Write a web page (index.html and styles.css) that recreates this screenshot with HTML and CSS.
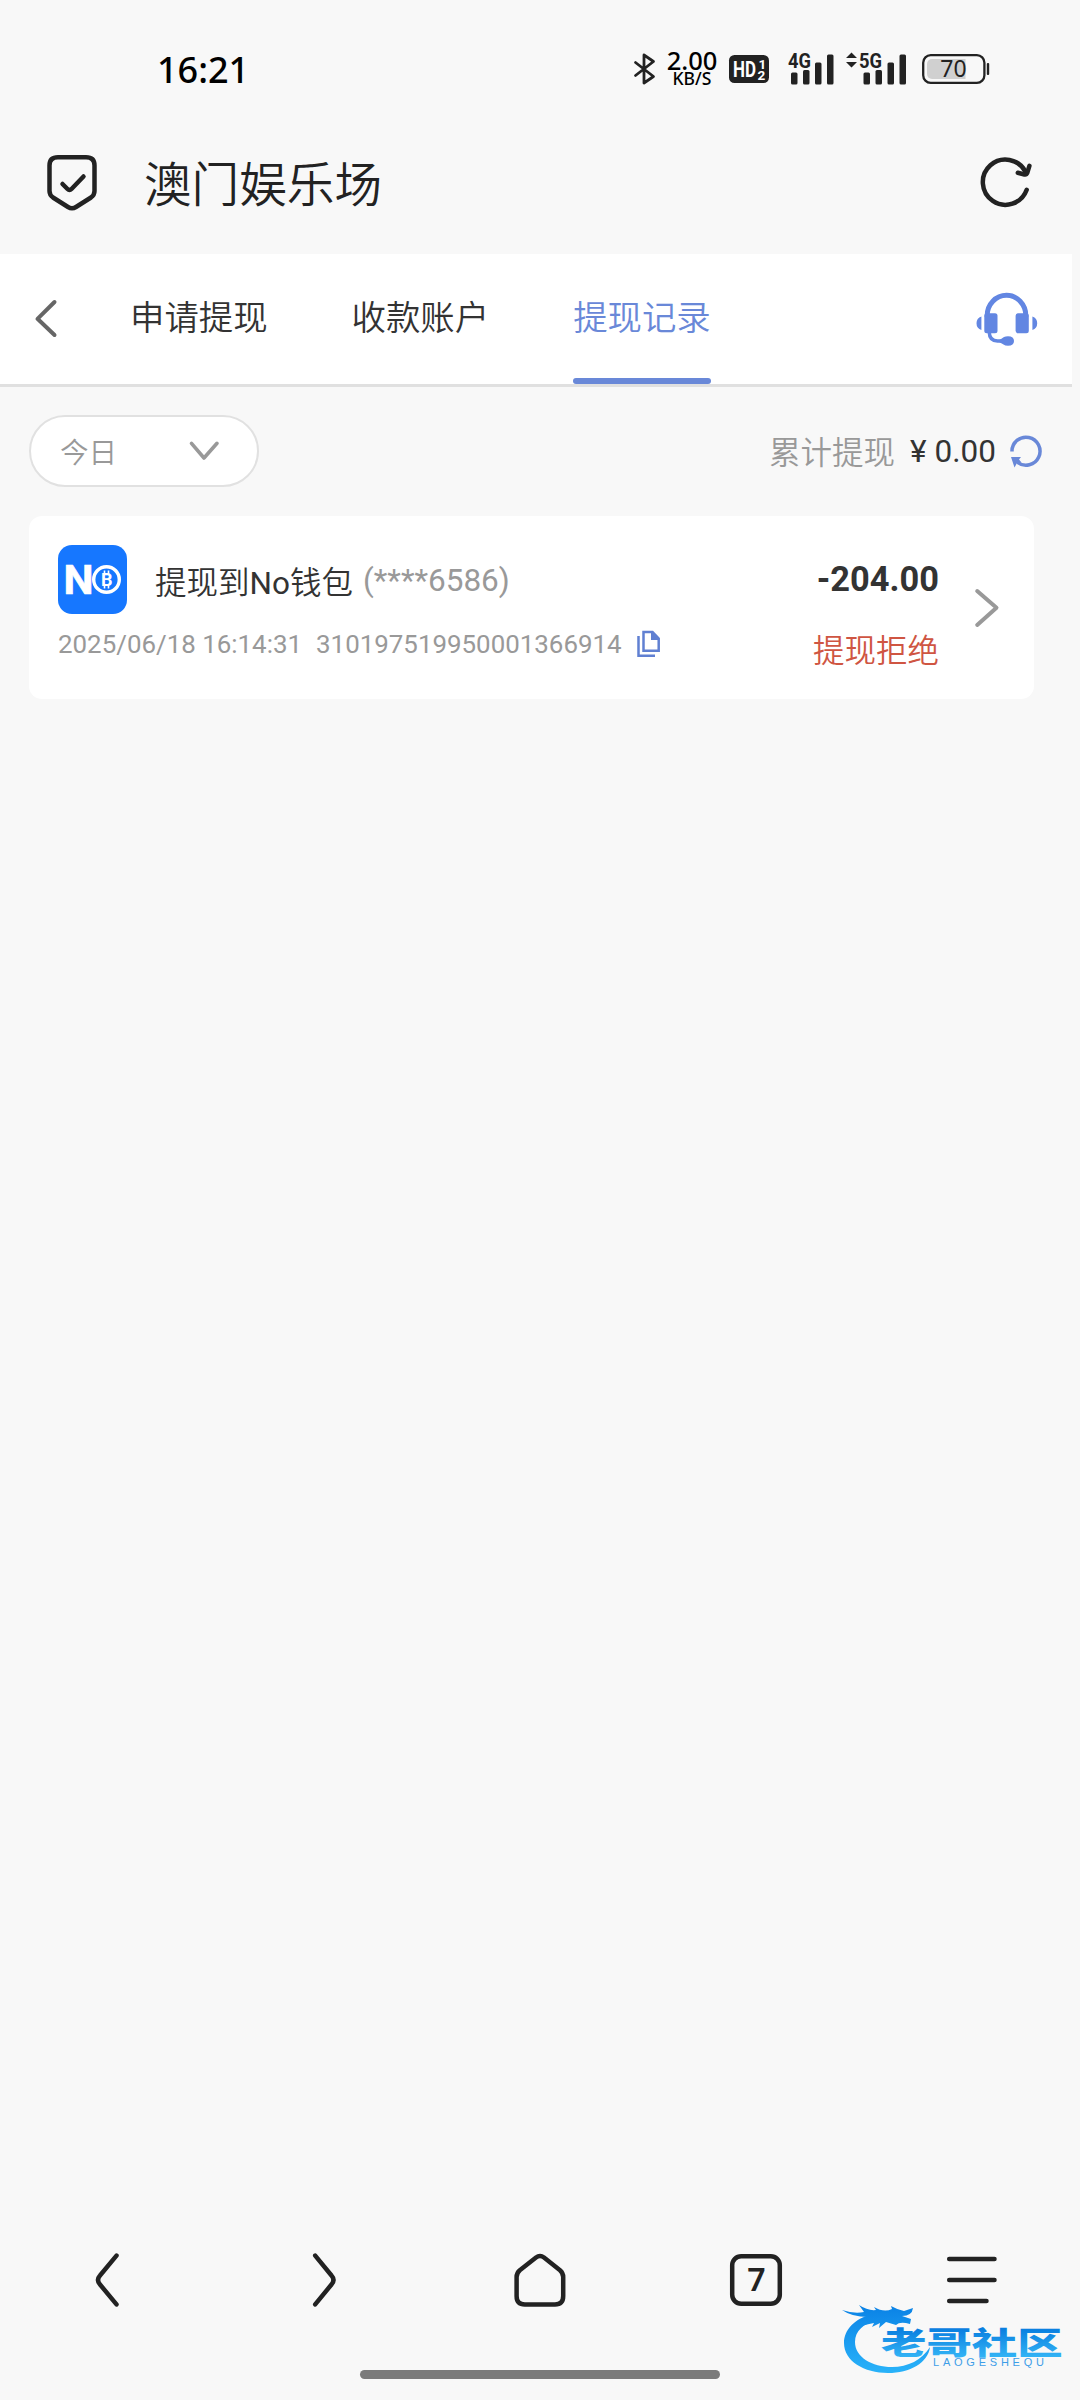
FILE: index.html
```html
<!DOCTYPE html>
<html lang="zh-CN">
<head>
<meta charset="utf-8">
<title>澳门娱乐场</title>
<link rel="stylesheet" href="styles.css">
</head>
<body>
<header class="status">
  <span class="clock">16:21</span>
  <div class="status-icons">
    <svg class="bt" width="22" height="34" viewBox="0 0 22 34"><path d="M1.500 10.500 19.500 24.500 10 31V3L19.500 9.500 1.500 23.500"/></svg>
    <div class="speed"><span class="rate">2.00</span><span class="unit">KB/S</span></div>
    <svg class="hd" width="40" height="28" viewBox="0 0 40 28"><rect width="40" height="28" rx="5.500"/><text class="hd-big" x="4" y="22" textLength="23" lengthAdjust="spacingAndGlyphs">HD</text><text class="hd-small" x="29.500" y="13.500">1</text><text class="hd-small" x="28.500" y="24.500">2</text></svg>
    <svg class="sig sig-4g" width="48" height="34" viewBox="0 0 48 34"><text class="net" x="1" y="16" textLength="23" lengthAdjust="spacingAndGlyphs">4G</text><rect x="4" y="20.500" width="6.500" height="12" rx="1.500"/><rect x="16" y="18" width="6.500" height="14.500" rx="1.500"/><rect x="28" y="10.500" width="6.500" height="22" rx="1.500"/><rect x="40" y="2.500" width="6.500" height="30" rx="1.500"/></svg>
    <svg class="sig" width="62" height="34" viewBox="0 0 62 34"><path d="M1 6 6.500.5 12 6zM1 10h11l-5.500 5.500z"/><text class="net" x="14" y="16" textLength="23" lengthAdjust="spacingAndGlyphs">5G</text><rect x="18.500" y="20.500" width="6.500" height="12" rx="1.500"/><rect x="30.500" y="18" width="6.500" height="14.500" rx="1.500"/><rect x="42.500" y="10.500" width="6.500" height="22" rx="1.500"/><rect x="54.500" y="2.500" width="6.500" height="30" rx="1.500"/></svg>
    <svg class="battery" width="68" height="30" viewBox="0 0 68 30"><path class="level" d="M10 5h33.500v20H10a5 5 0 0 1-5-5V10a5 5 0 0 1 5-5z"/><rect class="shell" x="1.200" y="1.200" width="61.200" height="27.600" rx="7.500"/><rect class="nub" x="64.800" y="9" width="2.400" height="12" rx="1"/><text x="31.500" y="23.300" text-anchor="middle">70</text></svg>
  </div>
</header>

<div class="titlebar">
  <svg class="line shield" width="54" height="58" viewBox="0 0 54 58"><path d="M13 4.300H41Q49.500 4.300 49.500 12.500V38Q49.500 42 46 44.500L31 54Q27 56.500 23 54L8 44.500Q4.500 42 4.500 38V12.500Q4.500 4.300 13 4.300z"/><path d="M17.500 31 22.500 36Q24.500 38 26.500 36L38.500 23.500"/></svg>
  <h1>澳门娱乐场</h1>
  <svg class="line reload" width="56" height="56" viewBox="0 0 56 56"><path d="M48.700 35.800A22.600 22.600 0 1 1 47.500 17.800"/><path d="M39.800 18.800 46.500 20.500Q48.500 20.800 49.200 19L51.400 11.800"/></svg>
</div>

<nav class="tabs">
  <svg class="tabs-back" width="24" height="40" viewBox="0 0 24 40"><path d="M20.500 3 3.500 19.800 20.500 36"/></svg>
  <a class="tab">申请提现</a>
  <a class="tab">收款账户</a>
  <a class="tab active">提现记录</a>
  <svg class="headset" width="62" height="56" viewBox="0 0 62 56"><path class="band" d="M11.200 26V24.500a19.300 20.200 0 0 1 38.600 0V26"/><rect x="8.300" y="22.300" width="13.200" height="20" rx="2.500"/><rect x="39.600" y="22.300" width="13.200" height="20" rx="2.500"/><path d="M5.400 25.500V39Q.5 37.500.5 32.300T5.400 25.500zM56.400 25.500V39Q61.200 37.500 61.200 32.300T56.400 25.500z"/><path class="mic" d="M13.200 41Q13.500 50 21.500 50H28"/><path d="M23.500 49 28 46Q29.500 45.300 32 45.300Q38 45.300 38 50Q38 54.800 32 54.800Q29 54.800 27.500 53.500L23.500 51.300z"/></svg>
</nav>

<section class="filter">
  <div class="select"><span>今日</span><svg width="30" height="20" viewBox="0 0 30 20"><path d="M2.500 2.300 15 17 28 2.300"/></svg></div>
  <div class="total"><span class="label">累计提现</span><span class="yen">¥</span><span>0.00</span>
  <svg width="34" height="34" viewBox="0 0 34 34"><path class="arc" d="M3 17.500A14 14 0 1 1 8.500 28.300"/><path class="head" d="M2 23H12L10 25.500 12.500 28.500 8 29 5.500 33.500z"/></svg></div>
</section>

<article class="record">
  <div class="info">
    <div class="method">
      <svg class="wallet" width="69" height="69" viewBox="0 0 69 69"><rect width="69" height="69" rx="14"/><text class="n" x="5.500" y="48.500" textLength="30" lengthAdjust="spacingAndGlyphs">N</text><circle cx="48.500" cy="34.500" r="12.800"/><text class="b" x="48.800" y="41" text-anchor="middle">B</text><path d="M46.500 25.500v3.500M50.500 25.500v3.500M46.500 40v3.500M50.500 40v3.500"/></svg>
      <span class="name">提现到<span class="latin">No</span>钱包</span><span class="acct">(****6586)</span>
    </div>
    <div class="meta"><span class="time">2025/06/18 16:14:31</span><span class="order">310197519950001366914</span>
    <svg width="24" height="28" viewBox="0 0 24 28"><path class="o" d="M6.500 2H15.500L21.700 8.500V20.800H6.500z"/><path class="f" d="M14 1 22.500 10H14z"/><path class="o" d="M1.500 6V25.700H18"/></svg></div>
  </div>
  <div class="result"><strong>-204.00</strong><span>提现拒绝</span></div>
  <svg class="go" width="26" height="40" viewBox="0 0 26 40"><path d="M3.200 3 22.500 19.800 3.200 37"/></svg>
</article>

<footer class="toolbar">
  <svg class="line" width="56" height="56" viewBox="0 0 56 56"><path d="M36.500 3.600 20 23.500Q16 28 20 32.500L36.500 52.400"/></svg>
  <svg class="line" width="56" height="56" viewBox="0 0 56 56"><path d="M19.200 3.600 35.500 23.500Q39.500 28 35.500 32.500L19.200 52.400"/></svg>
  <svg class="line" width="56" height="56" viewBox="0 0 56 56"><path d="M24 5.500Q28 2.500 32 5.500L48 18.200Q51.200 21 51.200 25V44Q51.200 52.500 43 52.500H12.800Q4.600 52.500 4.600 44V25Q4.600 21 7.800 18.200z"/></svg>
  <svg class="line pages" width="56" height="56" viewBox="0 0 56 56"><rect x="4.200" y="4.200" width="47.600" height="47.600" rx="9"/><text x="28.300" y="38.500" text-anchor="middle">7</text></svg>
  <svg class="line" width="56" height="56" viewBox="0 0 56 56"><path d="M5.200 7H50.500M5.200 28H50.500M5.200 49H42.500"/></svg>
</footer>
<div class="home-indicator"></div>

<svg class="brand" width="240" height="90" viewBox="0 0 240 90">
  <defs><linearGradient id="blue" x1="0" y1="0" x2="0" y2="1"><stop offset="0.250" stop-color="#0a7fe0"/><stop offset="1" stop-color="#3abdf9"/></linearGradient>
  <linearGradient id="ring" gradientUnits="userSpaceOnUse" x1="0" y1="10" x2="0" y2="78"><stop offset="0" stop-color="#0b83e6"/><stop offset="1" stop-color="#2ab4fa"/></linearGradient></defs>
  <path fill="url(#ring)" d="M32 17C14 22 4 33 4 46C4 64 24 76 48 76C70 76 88 66 90 50C82 63 68 70 52 70C32 70 15 60 15 45C15 34 24 26 36 24z"/>
  <path fill="url(#ring)" d="M2 13Q14 17 24 15L19 8Q28 14 36 13L34 10Q44 16 52 12L51 9Q58 13 64 14L73 11Q72 19 62 19L71 22 70 27Q60 24 56 28L46 25 39 31 40 26 32 30 34 26Q28 27 22 29L28 20Q12 20 2 13z"/>
  <text class="brand-cn" transform="translate(41 56.500) scale(1.490 1)" fill="url(#blue)">老哥社区</text>
  <text class="brand-en" x="93" y="69" textLength="111">LAOGESHEQU</text>
</svg>
</body>
</html>
```
FILE: styles.css
```css
* { box-sizing: border-box; }
body {
  position: relative;
  display: flex;
  flex-direction: column;
  width: 1080px;
  height: 2400px;
  margin: 0;
  overflow: hidden;
  background: #f8f8f8;
  color: #333;
  font-family: Roboto, "Noto Sans CJK SC", sans-serif;
}
svg { display: block; flex: none; fill: none; overflow: visible; }
.line { stroke: #222; stroke-width: 4.500; stroke-linecap: round; stroke-linejoin: round; }

.status { display: flex; align-items: center; justify-content: space-between; height: 140px; padding: 0 90px 0 157px; }
.clock { color: #000; font: 500 36px/40px "Noto Sans", sans-serif; }
.status-icons { display: flex; align-items: center; padding-bottom: 2px; }
.bt { stroke: #222; stroke-width: 2.800; stroke-linejoin: round; stroke-linecap: round; }
.speed { display: flex; flex-direction: column; align-items: center; width: 52px; margin-left: 10px; color: #000; font-family: "Noto Sans", sans-serif; font-weight: 500; }
.rate { font-size: 25.500px; line-height: 19px; }
.unit { font-size: 17.500px; line-height: 17px; }
.hd { margin-left: 11px; fill: #222; }
.hd text { fill: #fff; font-family: Roboto, sans-serif; font-weight: 700; }
.hd-big { font-size: 22px; }
.hd-small { font-size: 13.500px; }
.sig { fill: #222; }
.sig-4g { margin: 0 10px 0 18px; }
.net { font: 700 21px Roboto, sans-serif; }
.battery { margin-left: 15px; }
.level { fill: #d0d0d0; }
.shell { stroke: #222; stroke-width: 2.300; }
.nub { fill: #222; }
.battery text { fill: #222; font: 400 23px "Noto Sans", sans-serif; }

.titlebar { display: flex; align-items: center; height: 114px; padding: 0 46px 30px 45px; }
.titlebar h1 { flex: 1; margin: 0 0 0 45px; color: #222; font-family: "Noto Sans CJK SC", sans-serif; font-size: 47.600px; font-weight: 350; line-height: 60px; }

.tabs { display: flex; align-items: center; width: 1072px; height: 133px; padding: 0 34px; border-bottom: 3px solid #e0e0e0; background: #fff; }
.tabs-back { margin-right: 72px; stroke: #666; stroke-width: 4; stroke-linecap: round; stroke-linejoin: round; }
.tab { display: flex; align-items: center; height: 130px; margin-right: 84px; padding-bottom: 9px; font-family: "Noto Sans CJK SC", sans-serif; font-size: 34.400px; font-weight: 350; }
.tab.active { position: relative; color: #6988d8; }
.tab.active::after { content: ""; position: absolute; right: 0; bottom: 0; left: 0; height: 6px; border-radius: 3px; background: #6988d8; }
.headset { margin-left: auto; fill: #6286e2; }
.band { fill: none; stroke: #6286e2; stroke-width: 5; }
.mic { fill: none; stroke: #6286e2; stroke-width: 3.500; }

.filter { display: flex; align-items: center; justify-content: space-between; height: 129px; padding: 0 37px 1px 29px; }
.select { display: flex; align-items: center; justify-content: space-between; width: 230px; height: 72px; padding: 0 38px 0 29px; border: 2.500px solid #e1e1e1; border-radius: 36px; background: #fff; color: #999; font-family: "Noto Sans CJK SC", sans-serif; font-size: 28.600px; font-weight: 350; }
.select span { margin-top: -2px; }
.select svg { stroke: #999; stroke-width: 3.600; stroke-linecap: round; stroke-linejoin: round; }
.total { display: flex; align-items: center; font-size: 31.500px; }
.label { margin-top: -2px; color: #999; font-family: "Noto Sans CJK SC", sans-serif; font-weight: 350; }
.yen { margin: 0 8px 0 15px; }
.total svg { margin-left: 13px; }
.arc { stroke: #6988d8; stroke-width: 3.500; }
.head { fill: #6988d8; }

.record { display: flex; width: 1005px; height: 183px; margin-left: 29px; padding: 29px 34px 0 29px; border-radius: 13px; background: #fff; }
.info { flex: 1; }
.method { display: flex; align-items: center; height: 69px; font-size: 31.500px; }
.wallet { margin-right: 28px; }
.wallet rect { fill: #1677ff; }
.wallet text { fill: #fff; font-family: Roboto, sans-serif; font-weight: 700; }
.wallet .n { font-size: 40px; stroke: #fff; stroke-width: .6; }
.wallet .b { font-size: 18px; }
.wallet circle { stroke: #fff; stroke-width: 3.400; }
.wallet path { stroke: #fff; stroke-width: 1.600; }
.name { font-weight: 350; }
.latin { font-weight: 400; }
.acct { margin: 2px 0 0 10px; color: #999; }
.meta { display: flex; align-items: center; height: 30px; margin-top: 15px; color: #999; font-size: 25.900px; }
.order { margin: 0 15px 0 14px; }
.o { stroke: #6080d2; stroke-width: 2.500; }
.f { fill: #6080d2; }
.result { display: flex; flex-direction: column; align-items: flex-end; }
.result strong { font-size: 34.400px; line-height: 69px; }
.result span { margin-top: 11px; color: #cf5542; font-family: "Noto Sans CJK SC", sans-serif; font-size: 31.500px; font-weight: 350; line-height: 46px; }
.go { margin: 43px 0 0 35px; stroke: #999; stroke-width: 4; stroke-linecap: round; stroke-linejoin: round; }

.toolbar { display: flex; justify-content: space-between; margin-top: auto; padding: 0 80px; }
.pages text { fill: #222; stroke: none; font: 600 32px "Noto Sans", sans-serif; }
.home-indicator { width: 360px; height: 9px; margin: 62px auto 21px; border-radius: 5px; background: #7b7b7b; }

.brand { position: absolute; left: 840px; top: 2297px; }
.brand-cn { font: 900 30.500px "Noto Sans CJK SC", sans-serif; }
.brand-en { fill: #3e9ee8; font: 400 11px "Liberation Sans", sans-serif; }
```
